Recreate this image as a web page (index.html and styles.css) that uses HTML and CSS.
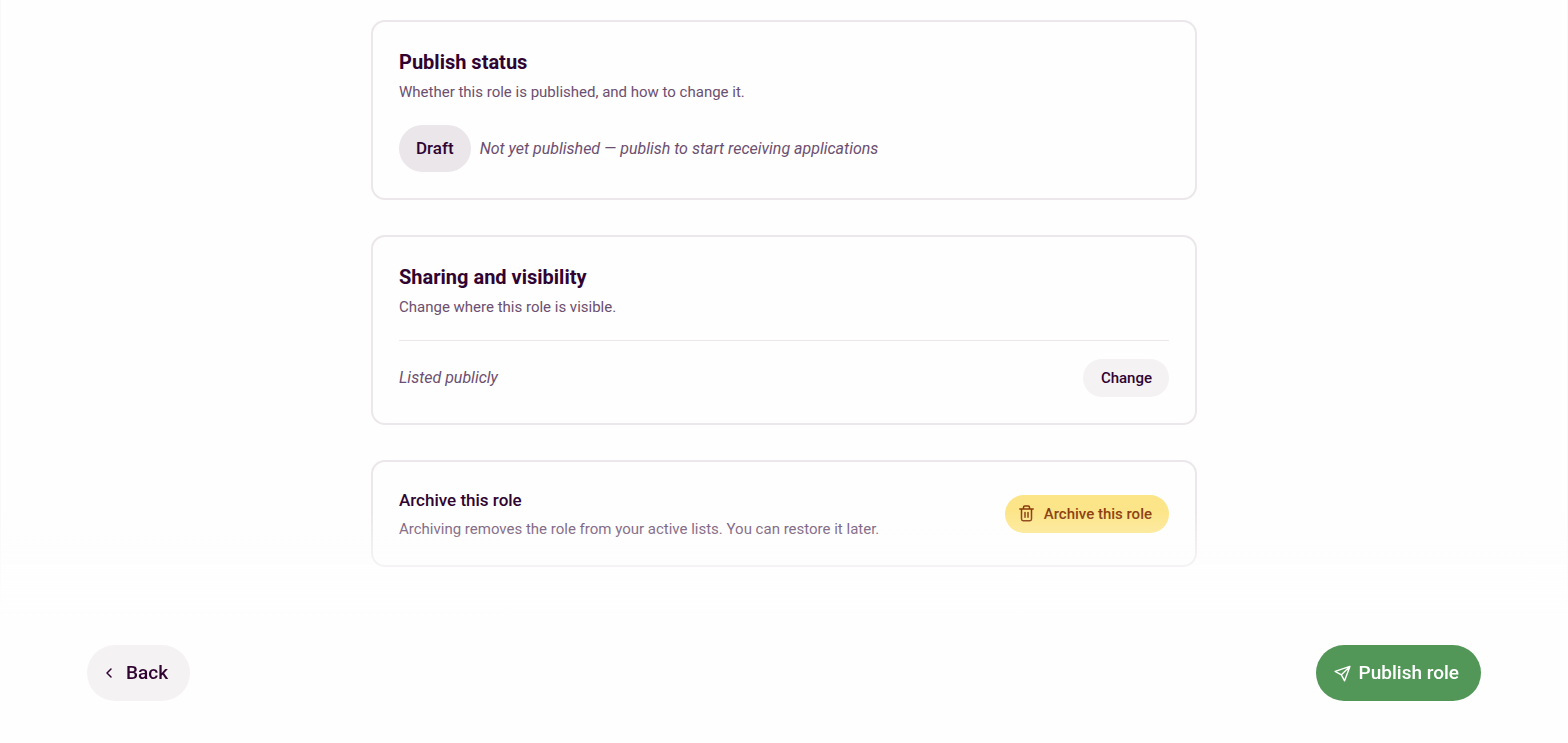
FILE: index.html
```html
<!DOCTYPE html>
<html lang="en">
<head>
    <meta charset="UTF-8">
    <meta name="viewport" content="width=device-width, initial-scale=1">
    <title>Publish role</title>
    <link rel="stylesheet" href="styles.css">
</head>

<body>

    <main class="content">

        <section class="card">
            <h2 class="card-title">Publish status</h2>
            <p class="card-text">Whether this role is published, and how to change it.</p>
            <div class="status">
                <span class="badge">Draft</span>
                <em class="note">Not yet published — publish to start receiving applications</em>
            </div>
        </section>

        <section class="card">
            <h2 class="card-title">Sharing and visibility</h2>
            <p class="card-text">Change where this role is visible.</p>
            <div class="row visibility">
                <em class="note">Listed publicly</em>
                <button type="button" class="btn">Change</button>
            </div>
        </section>

        <section class="card">
            <div class="row">
                <div>
                    <h3 class="card-subtitle">Archive this role</h3>
                    <p class="card-text">Archiving removes the role from your active lists. You can restore it later.</p>
                </div>
                <button type="button" class="btn btn-warning">
                    <svg class="icon-trash" viewBox="0 0 15 17" aria-hidden="true">
                        <path d="M.8 4h13.4M4.5 3.8V2.3c0-.8.5-1.3 1.3-1.3h3.4c.8 0 1.3.5 1.3 1.3v1.5M2.5 4.2v9.9c0 1 .6 1.6 1.6 1.6h6.8c1 0 1.6-.6 1.6-1.6V4.2M6 7.5v4.7M9 7.5v4.7"/>
                    </svg>
                    Archive this role
                </button>
            </div>
        </section>

    </main>

    <footer class="actions">
        <button type="button" class="btn btn-large">
            <svg class="icon-back" viewBox="0 0 8 12" aria-hidden="true">
                <path d="M6 2L2 6L6 10"/>
            </svg>
            Back
        </button>
        <button type="button" class="btn btn-large btn-primary">
            <svg class="icon-send" viewBox="0 0 18 18" aria-hidden="true">
                <path d="M16.8 1.5L1.2 6.8L7.8 10.4L11.2 16.8zM16.8 1.5L7.8 10.4"/>
            </svg>
            Publish role
        </button>
    </footer>

</body>
</html>
```
FILE: styles.css
```css
* {
    box-sizing: border-box;
    margin: 0;
    padding: 0;
}

body {
    min-height: 100vh;
    border: solid #f9f9f9;
    border-width: 0 1px;
    background-color: #fefefe;
    color: #2f0431;
    font-family: Roboto, "Liberation Sans", sans-serif;
    font-size: 15px;
    line-height: 20px;
}

.content {
    display: flex;
    flex-direction: column;
    gap: 35px;
    max-width: 826px;
    margin: 0 auto;
    padding: 20px 0 176px;
}

.card {
    padding: 26px;
    border: 2px solid #ebe7ea;
    border-radius: 14px;
}

.card-title {
    font-size: 20px;
    font-weight: 700;
    line-height: 28px;
}

.card-subtitle {
    font-size: 17px;
    font-weight: 500;
    line-height: 25px;
}

.card-text {
    margin-top: 6px;
    color: #6c4f70;
}

.note {
    color: #6c4f70;
    font-size: 16px;
    font-style: italic;
}

.status {
    display: flex;
    align-items: center;
    gap: 9px;
    margin-top: 23px;
}

.badge {
    padding: 12px 17px;
    border-radius: 24px;
    background-color: #eae6ea;
    font-size: 17px;
    font-weight: 500;
    line-height: 23px;
}

.row {
    display: flex;
    align-items: center;
    justify-content: space-between;
    gap: 16px;
}

.visibility {
    margin-top: 23px;
    padding-top: 18px;
    border-top: 1px solid #ebe7ea;
}

.btn {
    display: inline-flex;
    align-items: center;
    padding: 9px 17px 9px 18px;
    border: none;
    border-radius: 28px;
    background-color: #f5f2f4;
    color: #2f0431;
    font-family: inherit;
    font-size: 15px;
    font-weight: 500;
    line-height: 20px;
    cursor: pointer;
}

.btn svg {
    fill: none;
    stroke: currentColor;
    stroke-width: 1.5;
    stroke-linecap: round;
    stroke-linejoin: round;
}

.btn-warning {
    gap: 10px;
    padding-left: 14px;
    background-color: #fce588;
    color: #8a3b0c;
}

/* bar over the end of the page, the content fades out behind it */
.actions {
    position: fixed;
    right: 0;
    bottom: 0;
    left: 0;
    display: flex;
    justify-content: space-between;
    padding: 135px 87px 42px;
    background: linear-gradient(to top, #fefefe 53%, rgba(254, 254, 254, 0));
    pointer-events: none;
}

.btn-large {
    gap: 13px;
    padding: 14px 22px 14px 18px;
    font-size: 19px;
    line-height: 28px;
    pointer-events: auto;
}

.btn-primary {
    gap: 8px;
    background-color: #529757;
    color: #fff;
}

.icon-trash {
    width: 15px;
    height: 17px;
}

.icon-back {
    width: 8px;
    height: 12px;
}

.icon-send {
    width: 17px;
    height: 17px;
}
```
